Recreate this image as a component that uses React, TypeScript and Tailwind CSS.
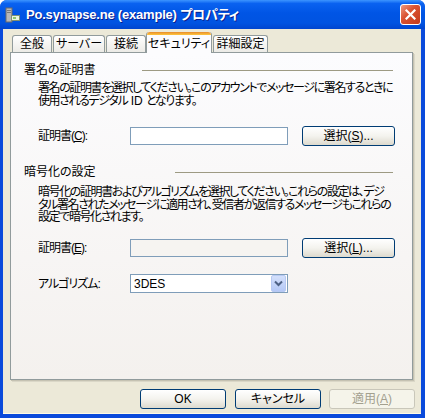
import React from 'react';

const jp = "font-['Liberation_Sans','Noto_Sans_CJK_JP',sans-serif] [font-feature-settings:'palt']";

function Tab({ label, active, className }: { label: string; active?: boolean; className: string }) {
  if (active) {
    return (
      <div className={`relative h-[21px] -mb-[1px] rounded-t-[3px] border-x border-[#919B9C] bg-[#FCFCFE] flex flex-col ${className}`}>
        <div className="h-[3px] rounded-t-[3px] bg-gradient-to-b from-[#E68B2C] to-[#FFC73C]" />
        <div className="flex-1 flex items-center justify-center text-[12px] leading-none text-black">{label}</div>
      </div>
    );
  }
  return (
    <div className={`h-[17px] rounded-t-[3px] border-x border-t border-[#919B9C] bg-gradient-to-b from-white to-[#ECEBE6] flex items-center justify-center text-[12px] leading-none text-black ${className}`}>
      {label}
    </div>
  );
}

function XpButton({ children, className = '', disabled }: { children: React.ReactNode; className?: string; disabled?: boolean }) {
  return (
    <div
      className={`h-[20px] rounded-[3px] border flex items-center justify-center text-[12px] leading-none ${
        disabled
          ? 'border-[#C9C7BA] bg-[#F5F4EA] text-[#A3A08F]'
          : 'border-[#003C74] bg-gradient-to-b from-white via-[#F4F3EE] to-[#DDDACE] text-black'
      } ${className}`}
    >
      {children}
    </div>
  );
}

function GroupHeader({ label, labelWidth }: { label: string; labelWidth: string }) {
  return (
    <div className="flex items-center h-[14px] pr-[19px]">
      <div className={`text-[12px] leading-[14px] whitespace-nowrap ${labelWidth}`}>{label}</div>
      <div className="flex-1 h-px bg-[#9D9A83]" />
    </div>
  );
}

export default function App() {
  return (
    <div className={`w-[425px] h-[418px] bg-white ${jp}`}>
      <div className="w-[425px] h-[418px] flex flex-col rounded-t-[7px] overflow-hidden bg-[#0A4ADB]">
        {/* title bar */}
        <div className="h-[29px] flex items-center pl-[5px] pr-[4px] bg-[linear-gradient(to_bottom,#3D95FF_0%,#0A62F0_12%,#0055E5_45%,#0053E1_80%,#0045CF_100%)]">
          <svg width="16" height="16" viewBox="0 0 16 16" className="shrink-0">
            <rect x="1" y="1" width="6" height="14" fill="#B8B8B8" stroke="#6B6B6B" />
            <rect x="2" y="3" width="4" height="1" fill="#7A7A7A" />
            <rect x="2" y="5" width="4" height="1" fill="#7A7A7A" />
            <rect x="6.5" y="8.5" width="8" height="5" fill="#E8F4E0" stroke="#7E8F74" />
            <rect x="8" y="10" width="3" height="2" fill="#8CC46E" />
          </svg>
          <div className="ml-[5px] text-white font-bold text-[13px] leading-none tracking-[-0.2px] whitespace-nowrap [text-shadow:1px_1px_0_#0A1E8C]">
            Po.synapse.ne (example) プロパティ
          </div>
          <div className="ml-auto w-[21px] h-[21px] rounded-[3px] border border-white bg-[linear-gradient(135deg,#EE9A80_0%,#DA5332_40%,#C5391B_100%)] flex items-center justify-center">
            <svg width="11" height="11" viewBox="0 0 11 11">
              <path d="M1.5 1.5 L9.5 9.5 M9.5 1.5 L1.5 9.5" stroke="white" strokeWidth="2.2" strokeLinecap="square" />
            </svg>
          </div>
        </div>

        {/* client area */}
        <div className="flex-1 ml-[3px] mr-[4px] mb-[4px] bg-[#ECE9D8] flex flex-col border-b border-[#FFFBE6]">
          <div className="pl-[7px] pr-[8px] pt-[3px]">
            <div className="relative z-10 flex items-end h-[20px] pl-[2px]">
              <Tab label="全般" className="w-[40px]" />
              <Tab label="サーバー" className="ml-[1px] w-[52px]" />
              <Tab label="接続" className="ml-[1px] w-[40px]" />
              <Tab label="セキュリティ" active className="w-[66px]" />
              <Tab label="詳細設定" className="ml-[1px] w-[55px]" />
            </div>
            <div className="h-[328px] border border-[#919B9C] bg-gradient-to-b from-[#FCFCFE] to-[#F4F1EE] shadow-[1px_1px_0_#C5C2B2,2px_2px_0_#DAD7C7] pl-[13px] text-black">
              <div className="mt-[10px]">
                <GroupHeader label="署名の証明書" labelWidth="w-[118px]" />
              </div>
              <div className="ml-[14px] mt-[5px] text-[12px] leading-[13px] tracking-[-1.4px] whitespace-nowrap">
                <div>署名の証明書を選択してください。このアカウントでメッセージに署名するときに</div>
                <div>
                  使用されるデジタル<span className="tracking-normal"> ID </span>となります。
                </div>
              </div>
              <div className="ml-[14px] mt-[18px] flex items-center h-[20px]">
                <div className="w-[92px] text-[12px] leading-none tracking-[-1px]">
                  証明書(<span className="underline">C</span>):
                </div>
                <div className="w-[158px] h-[18px] border border-[#7F9DB9] bg-white" />
                <XpButton className="ml-[14px] w-[93px]">
                  選択(<span className="underline">S</span>)...
                </XpButton>
              </div>

              <div className="mt-[19px]">
                <GroupHeader label="暗号化の設定" labelWidth="w-[151px]" />
              </div>
              <div className="ml-[14px] mt-[7px] text-[12px] leading-[12.5px] tracking-[-1.4px] whitespace-nowrap">
                <div>暗号化の証明書およびアルゴリズムを選択してください。これらの設定は、デジ</div>
                <div>タル署名されたメッセージに適用され、受信者が返信するメッセージもこれらの</div>
                <div>設定で暗号化されます。</div>
              </div>
              <div className="ml-[14px] mt-[14.5px] flex items-center h-[20px]">
                <div className="w-[92px] text-[12px] leading-none tracking-[-1px]">
                  証明書(<span className="underline">E</span>):
                </div>
                <div className="w-[158px] h-[18px] border border-[#7F9DB9] bg-[#F6F4F1]" />
                <XpButton className="ml-[14px] w-[93px]">
                  選択(<span className="underline">L</span>)...
                </XpButton>
              </div>
              <div className="ml-[14px] mt-[15.5px] flex items-center h-[20px]">
                <div className="w-[92px] text-[12px] leading-none tracking-[-1px]">アルゴリズム:</div>
                <div className="w-[158px] h-[19px] border border-[#7F9DB9] bg-white flex items-center">
                  <div className="flex-1 pl-[3px] text-[12px] leading-none">3DES</div>
                  <div className="w-[15px] h-[17px] mr-px rounded-[2px] border border-[#B7C9F3] bg-gradient-to-b from-[#D4E0FB] to-[#B4C8F6] flex items-center justify-center">
                    <svg width="9" height="7" viewBox="0 0 9 7">
                      <path d="M1 1.5 L4.5 5 L8 1.5" fill="none" stroke="#4D6185" strokeWidth="2" />
                    </svg>
                  </div>
                </div>
              </div>
            </div>
          </div>

          <div className="mt-[9px] flex justify-end pr-[6px]">
            <XpButton className="w-[86px]">OK</XpButton>
            <XpButton className="ml-[9px] w-[86px]">キャンセル</XpButton>
            <XpButton disabled className="ml-[8px] w-[86px]">
              適用(<span className="underline">A</span>)
            </XpButton>
          </div>
        </div>
      </div>
    </div>
  );
}
